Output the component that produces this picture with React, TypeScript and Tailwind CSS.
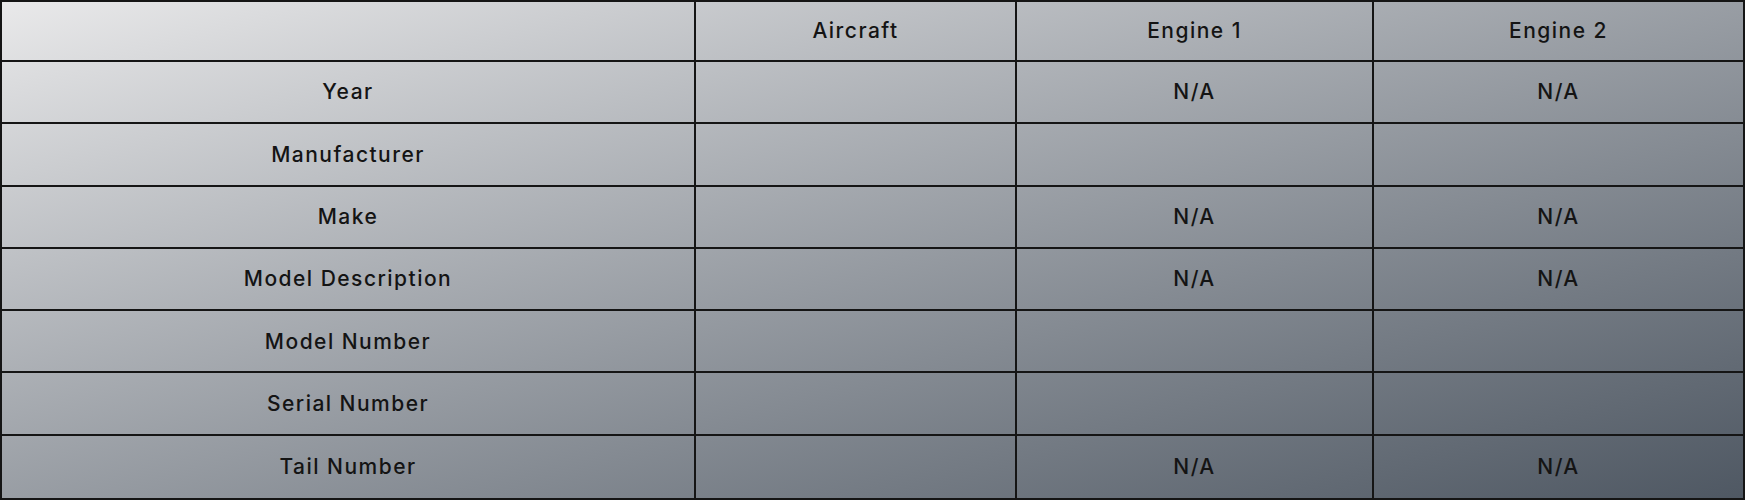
const columns = ["", "Aircraft", "Engine 1", "Engine 2"]

const rows: [string, string, string, string][] = [
    ["Year", "", "N/A", "N/A"],
    ["Manufacturer", "", "", ""],
    ["Make", "", "N/A", "N/A"],
    ["Model Description", "", "N/A", "N/A"],
    ["Model Number", "", "", ""],
    ["Serial Number", "", "", ""],
    ["Tail Number", "", "N/A", "N/A"],
]

function Cell({ text, lastCol, lastRow }: { text: string; lastCol: boolean; lastRow: boolean }) {
    return (
        <div
            className={
                "flex items-center justify-center border-[#151515] " +
                (lastCol ? "" : "border-r-2 ") +
                (lastRow ? "" : "border-b-2")
            }
        >
            {text}
        </div>
    )
}

export default function App() {
    return (
        <div className="h-[500px] w-[1745px] overflow-hidden">
            <div
                className="grid h-full w-full grid-cols-[694px_321px_357px_1fr] grid-rows-[60px_repeat(7,1fr)] border-2 border-[#151515] bg-gradient-to-br from-[#e9e9ea] to-[#4f5863] text-[21px] font-medium tracking-[0.07em] text-[#141414]"
                style={{ fontFamily: "Inter, 'Noto Sans', sans-serif" }}
            >
                {columns.map((c, i) => (
                    <Cell key={"h" + i} text={c} lastCol={i === 3} lastRow={false} />
                ))}
                {rows.map((r, ri) =>
                    r.map((t, ci) => (
                        <Cell
                            key={ri + "-" + ci}
                            text={t}
                            lastCol={ci === 3}
                            lastRow={ri === rows.length - 1}
                        />
                    ))
                )}
            </div>
        </div>
    )
}
